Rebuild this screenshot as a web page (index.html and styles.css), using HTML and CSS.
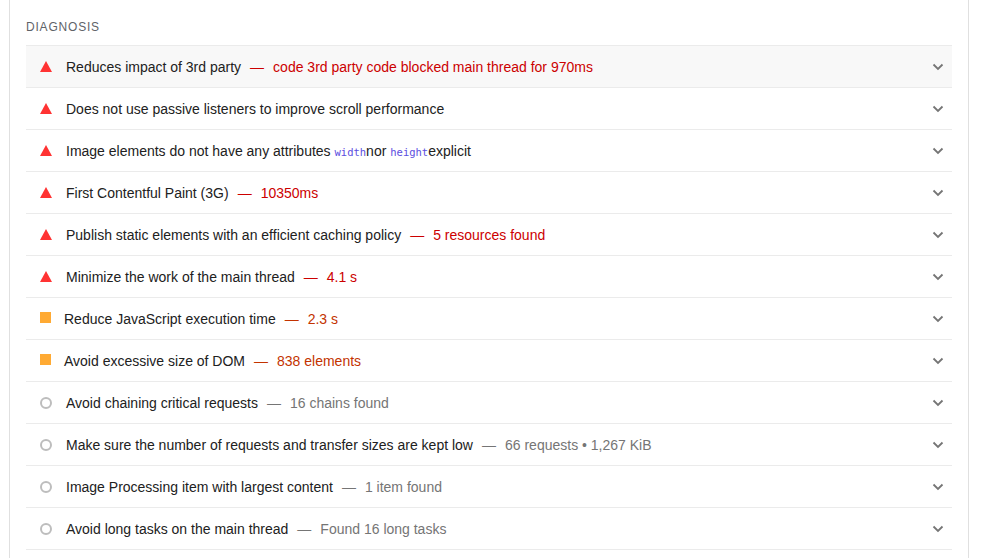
FILE: index.html
```html
<!DOCTYPE html>
<html>
<head>
<meta charset="utf-8">
<link rel="stylesheet" href="styles.css">
</head>
<body>
<div class="page">
  <div class="group-header">Diagnosis</div>
  <div class="audits">
    <div class="audit hover">
      <span class="icon fail"></span>
      <span class="title">Reduces impact of 3rd party</span>
      <span class="sep fail-c">—</span>
      <span class="disp fail-c">code 3rd party code blocked main thread for 970ms</span>
      <span class="chev"><svg width="12" height="8" viewBox="0 0 12 8"><path d="M1.5 1.5 L6 6 L10.5 1.5" fill="none" stroke="#757575" stroke-width="1.8"/></svg></span>
    </div>
    <div class="audit">
      <span class="icon fail"></span>
      <span class="title">Does not use passive listeners to improve scroll performance</span>
      <span class="chev"><svg width="12" height="8" viewBox="0 0 12 8"><path d="M1.5 1.5 L6 6 L10.5 1.5" fill="none" stroke="#757575" stroke-width="1.8"/></svg></span>
    </div>
    <div class="audit">
      <span class="icon fail"></span>
      <span class="title">Image elements do not have any attributes <code>width</code>nor <code>height</code>explicit</span>
      <span class="chev"><svg width="12" height="8" viewBox="0 0 12 8"><path d="M1.5 1.5 L6 6 L10.5 1.5" fill="none" stroke="#757575" stroke-width="1.8"/></svg></span>
    </div>
    <div class="audit">
      <span class="icon fail"></span>
      <span class="title">First Contentful Paint (3G)</span>
      <span class="sep fail-c">—</span>
      <span class="disp fail-c">10350ms</span>
      <span class="chev"><svg width="12" height="8" viewBox="0 0 12 8"><path d="M1.5 1.5 L6 6 L10.5 1.5" fill="none" stroke="#757575" stroke-width="1.8"/></svg></span>
    </div>
    <div class="audit">
      <span class="icon fail"></span>
      <span class="title">Publish static elements with an efficient caching policy</span>
      <span class="sep fail-c">—</span>
      <span class="disp fail-c">5 resources found</span>
      <span class="chev"><svg width="12" height="8" viewBox="0 0 12 8"><path d="M1.5 1.5 L6 6 L10.5 1.5" fill="none" stroke="#757575" stroke-width="1.8"/></svg></span>
    </div>
    <div class="audit">
      <span class="icon fail"></span>
      <span class="title">Minimize the work of the main thread</span>
      <span class="sep fail-c">—</span>
      <span class="disp fail-c">4.1 s</span>
      <span class="chev"><svg width="12" height="8" viewBox="0 0 12 8"><path d="M1.5 1.5 L6 6 L10.5 1.5" fill="none" stroke="#757575" stroke-width="1.8"/></svg></span>
    </div>
    <div class="audit">
      <span class="icon avg"></span>
      <span class="title">Reduce JavaScript execution time</span>
      <span class="sep avg-c">—</span>
      <span class="disp avg-c">2.3 s</span>
      <span class="chev"><svg width="12" height="8" viewBox="0 0 12 8"><path d="M1.5 1.5 L6 6 L10.5 1.5" fill="none" stroke="#757575" stroke-width="1.8"/></svg></span>
    </div>
    <div class="audit">
      <span class="icon avg"></span>
      <span class="title">Avoid excessive size of DOM</span>
      <span class="sep avg-c">—</span>
      <span class="disp avg-c">838 elements</span>
      <span class="chev"><svg width="12" height="8" viewBox="0 0 12 8"><path d="M1.5 1.5 L6 6 L10.5 1.5" fill="none" stroke="#757575" stroke-width="1.8"/></svg></span>
    </div>
    <div class="audit">
      <span class="icon info"></span>
      <span class="title">Avoid chaining critical requests</span>
      <span class="sep info-c">—</span>
      <span class="disp info-c">16 chains found</span>
      <span class="chev"><svg width="12" height="8" viewBox="0 0 12 8"><path d="M1.5 1.5 L6 6 L10.5 1.5" fill="none" stroke="#757575" stroke-width="1.8"/></svg></span>
    </div>
    <div class="audit">
      <span class="icon info"></span>
      <span class="title">Make sure the number of requests and transfer sizes are kept low</span>
      <span class="sep info-c">—</span>
      <span class="disp info-c">66 requests • 1,267 KiB</span>
      <span class="chev"><svg width="12" height="8" viewBox="0 0 12 8"><path d="M1.5 1.5 L6 6 L10.5 1.5" fill="none" stroke="#757575" stroke-width="1.8"/></svg></span>
    </div>
    <div class="audit">
      <span class="icon info"></span>
      <span class="title">Image Processing item with largest content</span>
      <span class="sep info-c">—</span>
      <span class="disp info-c">1 item found</span>
      <span class="chev"><svg width="12" height="8" viewBox="0 0 12 8"><path d="M1.5 1.5 L6 6 L10.5 1.5" fill="none" stroke="#757575" stroke-width="1.8"/></svg></span>
    </div>
    <div class="audit">
      <span class="icon info"></span>
      <span class="title">Avoid long tasks on the main thread</span>
      <span class="sep info-c">—</span>
      <span class="disp info-c">Found 16 long tasks</span>
      <span class="chev"><svg width="12" height="8" viewBox="0 0 12 8"><path d="M1.5 1.5 L6 6 L10.5 1.5" fill="none" stroke="#757575" stroke-width="1.8"/></svg></span>
    </div>
  </div>
</div>
</body>
</html>
```
FILE: styles.css
```css
html, body {
  margin: 0;
  padding: 0;
  background: #fff;
  height: 100%;
  overflow: hidden;
}
body {
  font-family: "Liberation Sans", Arial, sans-serif;
  color: #212121;
}
.page {
  margin-left: 9px;
  width: 960px;
  min-height: 100%;
  border-left: 1px solid #e0e0e0;
  border-right: 1px solid #e0e0e0;
  padding: 0 16px;
  box-sizing: border-box;
}
.group-header {
  font-size: 12px;
  letter-spacing: 0.8px;
  text-transform: uppercase;
  color: #5f6368;
  line-height: 16px;
  padding-top: 19px;
  padding-bottom: 10px;
}
.audits {
  border-bottom: 1px solid #ebebeb;
}
.audit {
  display: flex;
  align-items: center;
  height: 41px;
  border-top: 1px solid #ebebeb;
  font-size: 14px;
  padding-left: 14px;
  padding-right: 8px;
}
.audit.hover {
  background: #f8f8f8;
}
.icon {
  flex: none;
  display: inline-block;
  margin-right: 14px;
}
.icon.fail {
  width: 0;
  height: 0;
  border-left: 6px solid transparent;
  border-right: 6px solid transparent;
  border-bottom: 11px solid #ff3333;
  margin-top: -1px;
}
.icon.avg {
  width: 11px;
  height: 11px;
  background: #ffaa33;
  margin-right: 13px;
  margin-top: -2px;
}
.icon.info {
  width: 8px;
  height: 8px;
  border: 2px solid #bdbdbd;
  border-radius: 50%;
  margin-right: 14px;
}
.title {
  white-space: nowrap;
}
code {
  font-family: "DejaVu Sans Mono", "Liberation Mono", monospace;
  font-size: 10.5px;
  color: #5c4ee0;
}
.sep {
  margin: 0 9px 0 9px;
}
.fail-c { color: #cc0000; }
.avg-c { color: #c33300; }
.info-c { color: #757575; }
.chev {
  margin-left: auto;
  display: flex;
  align-items: center;
  padding-top: 1px;
}
```
